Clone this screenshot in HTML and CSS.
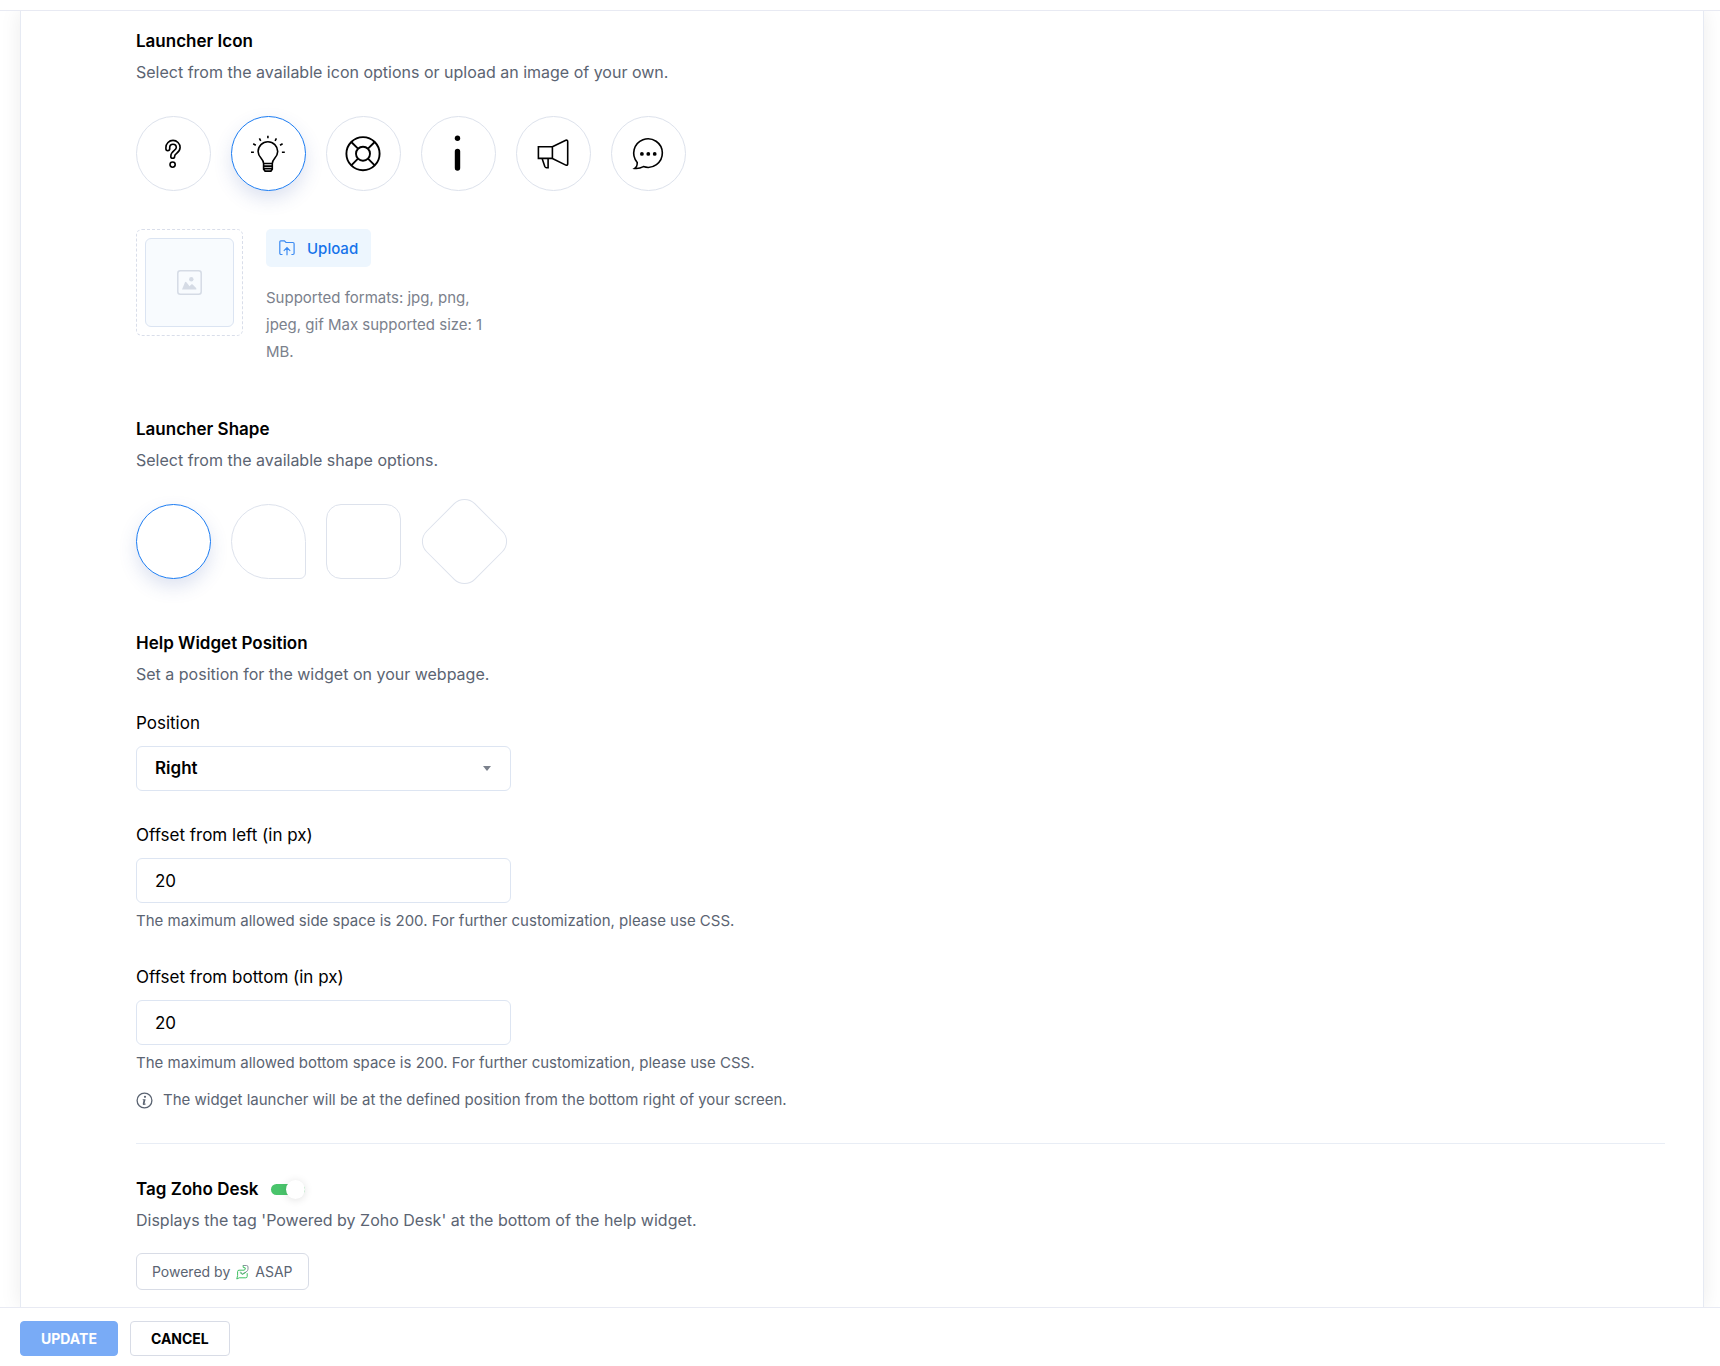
FILE: index.html
```html
<!DOCTYPE html>
<html lang="en">
<head>
    <meta charset="UTF-8">
    <meta name="viewport" content="width=device-width, initial-scale=1.0">
    <title>Help Widget</title>
    <link rel="stylesheet" href="styles.css">
</head>
<body>
    <form class="page">
        <div class="topbar"></div>
        <main class="panel">
            <section class="section">
                <h2>Launcher Icon</h2>
                <p class="desc">Select from the available icon options or upload an image of your own.</p>
                <div class="options">
                    <label class="option">
                        <input type="radio" name="icon" value="question" aria-label="Question mark">
                        <span class="shape circle">
                            <svg viewBox="0 0 42 42"><g stroke-linecap="round"><path d="M14.8 15.8v-1.3a5.2 5.2 0 0 1 10.4 0c0 4.6-5.5 4.3-5.5 8.9" stroke-width="5.4"/><path d="M14.8 15.8v-1.3a5.2 5.2 0 0 1 10.4 0c0 4.6-5.5 4.3-5.5 8.9" stroke="#fff" stroke-width="2.2"/></g><circle cx="19.6" cy="31.6" r="2.6"/></svg>
                        </span>
                    </label>
                    <label class="option">
                        <input type="radio" name="icon" value="bulb" aria-label="Light bulb" checked>
                        <span class="shape circle">
                            <svg viewBox="0 0 42 42"><path d="M15.6 30.5c0-4.6-5.5-6-5.5-12a9.8 9.8 0 0 1 19.6 0c0 6-5.4 7.4-5.4 12zM15.6 30.5v5.8l1.5 1.8h5.8l1.4-1.8v-5.8M15.6 33.1h8.7M15.6 35.6h8.7"/><path d="M19.9 2.7v2.6M11.4 5.4l1.3 2.4M28.4 5.4l-1.3 2.4M5.2 10.8l2.6 1.5M34.6 10.8l-2.6 1.5M3 19.3h2.9M36.8 19.3h-2.9"/></svg>
                        </span>
                    </label>
                    <label class="option">
                        <input type="radio" name="icon" value="lifebuoy" aria-label="Lifebuoy">
                        <span class="shape circle">
                            <svg viewBox="0 0 42 42"><g stroke-width="1.9"><circle cx="20" cy="20.7" r="16.6"/><circle cx="20" cy="20.7" r="7"/><path d="M8.3 9l6.7 6.7M31.7 9l-6.7 6.7M8.3 32.4l6.7-6.7M31.7 32.4l-6.7-6.7"/></g></svg>
                        </span>
                    </label>
                    <label class="option">
                        <input type="radio" name="icon" value="info" aria-label="Information">
                        <span class="shape circle">
                            <svg viewBox="0 0 42 42"><g fill="#000" stroke="none"><circle cx="19.5" cy="5.3" r="2.7"/><rect x="16.8" y="15.7" width="5.4" height="22" rx="2.7"/></g></svg>
                        </span>
                    </label>
                    <label class="option">
                        <input type="radio" name="icon" value="megaphone" aria-label="Megaphone">
                        <span class="shape circle">
                            <svg viewBox="0 0 42 42"><path d="M5.4 13.7h14v11.7h-14zM19.4 13.7l13.4-6.4q1.9-.7 1.9 1.4v22q0 2.1-1.9 1.4l-13.4-6.6M9.1 25.6l2.7 7.9q.6 1.2 1.7 1.2h1.6v-9.1"/></svg>
                        </span>
                    </label>
                    <label class="option">
                        <input type="radio" name="icon" value="chat" aria-label="Chat">
                        <span class="shape circle">
                            <svg viewBox="0 0 42 42"><path d="M9.2 29.4A14.3 14.3 0 1 1 15.4 33.6c-2.7 1.5-5.4 2.2-8.7 1.8 2.2-1.4 2.7-3.3 2.5-6z"/><g fill="#000" stroke="none"><circle cx="13.9" cy="20.9" r="1.9"/><circle cx="20.3" cy="20.9" r="1.9"/><circle cx="26.7" cy="20.9" r="1.9"/></g></svg>
                        </span>
                    </label>
                </div>
                <div class="upload">
                    <div class="preview">
                        <div class="preview-inner">
                            <svg viewBox="0 0 25 25"><rect x=".8" y=".8" width="23.4" height="23.4" rx="2.5" fill="none" stroke="#d5dbe5" stroke-width="1.5"/><circle cx="14.3" cy="9.3" r="2.2"/><path d="M5 19.5l3-7.2q.6-1 1.4 0l3.2 4 1.6-1.8q.8-.7 1.5 0l3.6 3.7v1.3z"/></svg>
                        </div>
                    </div>
                    <div class="upload-info">
                        <button type="button" class="btn-upload">
                            <svg viewBox="0 0 16 16"><path d="M3.5 14.5H2a1.2 1.2 0 0 1-1.2-1.2V1.8Q.8.8 1.8.8h3.6l1.6 1.7h6.9q1.2 0 1.2 1.2v9.6q0 1.2-1.2 1.2h-1.5M8 15.2V7.6M4.8 10.8L8 7.6l3.2 3.2"/></svg>
                            Upload
                        </button>
                        <p>Supported formats: jpg, png, jpeg, gif Max supported size: 1 MB.</p>
                    </div>
                </div>
            </section>

            <section class="section">
                <h2>Launcher Shape</h2>
                <p class="desc">Select from the available shape options.</p>
                <div class="options">
                    <label class="option">
                        <input type="radio" name="shape" value="circle" aria-label="Circle" checked>
                        <span class="shape circle"></span>
                    </label>
                    <label class="option">
                        <input type="radio" name="shape" value="drop" aria-label="Drop">
                        <span class="shape drop"></span>
                    </label>
                    <label class="option">
                        <input type="radio" name="shape" value="square" aria-label="Square">
                        <span class="shape square"></span>
                    </label>
                    <label class="option">
                        <input type="radio" name="shape" value="diamond" aria-label="Diamond">
                        <span class="shape diamond"></span>
                    </label>
                </div>
            </section>

            <section>
                <h2>Help Widget Position</h2>
                <p class="desc">Set a position for the widget on your webpage.</p>
                <div class="fields">
                    <div class="field">
                        <label for="position">Position</label>
                        <div class="select">
                            <select id="position">
                                <option>Right</option>
                                <option>Left</option>
                            </select>
                        </div>
                    </div>
                    <div class="field">
                        <label for="offset-left">Offset from left (in px)</label>
                        <input type="text" id="offset-left" value="20">
                        <p class="help">The maximum allowed side space is 200. For further customization, please use CSS.</p>
                    </div>
                    <div class="field">
                        <label for="offset-bottom">Offset from bottom (in px)</label>
                        <input type="text" id="offset-bottom" value="20">
                        <p class="help">The maximum allowed bottom space is 200. For further customization, please use CSS.</p>
                    </div>
                </div>
                <p class="note">
                    <svg viewBox="0 0 17 17"><circle cx="8.5" cy="8.5" r="7.4" fill="none" stroke="#5b6472" stroke-width="1.3"/><circle cx="9" cy="4.8" r="1.1"/><path d="M6.8 7.2h2.8l-1 4.2q-.1.7 1.2.2v.6q-1.2.9-2.3.7-1-.2-.7-1.4l.7-3.3-.9-.2z"/></svg>
                    The widget launcher will be at the defined position from the bottom right of your screen.
                </p>
            </section>

            <section class="tag">
                <div class="tag-head">
                    <h2><label for="tag">Tag Zoho Desk</label></h2>
                    <input type="checkbox" id="tag" class="toggle" checked>
                </div>
                <p class="desc">Displays the tag 'Powered by Zoho Desk' at the bottom of the help widget.</p>
                <div class="powered">
                    Powered by
                    <svg viewBox="0 0 13 16"><path d="M7 1.5h3.5Q12 1.5 12 3v2.2Q12 7 10 8L6.6 9.8 4.6 8" stroke="#8a929e"/><path d="M7 1.5l.3 2 1.9.3v1.6L8 6.2H3Q1.6 6.2 1.6 7.6v4L.8 15l2.4-1.2h6.6q1.4 0 1.4-1.4V9.2M3.8 8.4l2.6 2 3.4-2" stroke="#3fbf62"/></svg>
                    ASAP
                </div>
            </section>
        </main>
        <footer class="footer">
            <button type="submit" class="btn primary">UPDATE</button>
            <button type="button" class="btn">CANCEL</button>
        </footer>
    </form>
</body>
</html>
```

FILE: styles.css
```css
* {
  box-sizing: border-box;
}

body {
  margin: 0;
  font-family: Inter, "Liberation Sans", sans-serif;
  font-size: 16px;
  line-height: 24px;
  color: #000;
  background-color: #fff;
}

h2, p {
  margin: 0;
}

h2 {
  font-size: 17px;
  font-weight: 600;
}

input, select, button {
  font-family: inherit;
}

.page {
  display: flex;
  flex-direction: column;
  min-height: 100vh;
  overflow-x: clip;
}

.topbar {
  position: relative;
  z-index: 1;
  height: 11px;
  background-color: #fff;
  border-bottom: 1px solid #e8eaf3;
}

.panel {
  flex: 1;
  margin: 0 16px 0 20px;
  padding: 18px 38px 15px 115px;
  background-color: #fff;
  border: solid #e6eaf3;
  border-width: 0 1px;
  box-shadow: 0 0 20px rgba(0, 0, 0, 0.08);
}

.section {
  margin-bottom: 52px;
}

.desc {
  margin-top: 7px;
  color: #5b6472;
}

/* icon and shape pickers */
.options {
  display: flex;
  flex-wrap: wrap;
  align-items: center;
  gap: 20px;
  margin-top: 32px;
}

.option {
  position: relative;
  cursor: pointer;
}

.option input {
  position: absolute;
  inset: 0;
  margin: 0;
  opacity: 0;
}

.shape {
  display: flex;
  align-items: center;
  justify-content: center;
  width: 75px;
  height: 75px;
  border: 1px solid #dde2ec;
}

.option input:checked + .shape {
  border-color: #1a7bf2;
  box-shadow: 0 8px 18px rgba(60, 90, 170, 0.17);
}

.shape svg {
  width: 42px;
  height: 42px;
  fill: none;
  stroke: #000;
  stroke-width: 1.6;
}

.circle {
  border-radius: 50%;
}

.drop {
  border-radius: 50% 50% 6px 50%;
}

.square {
  border-radius: 15px;
}

.diamond {
  width: 69px;
  height: 69px;
  margin: 0 9px;
  border-radius: 15px;
  transform: rotate(45deg);
}

/* upload */
.upload {
  display: flex;
  align-items: flex-start;
  gap: 23px;
  margin-top: 38px;
}

.preview {
  padding: 8px;
  border: 1px dashed #d9deea;
  border-radius: 6px;
}

.preview-inner {
  display: flex;
  align-items: center;
  justify-content: center;
  width: 89px;
  height: 89px;
  background-color: #f8fbfe;
  border: 1px solid #dbe4f2;
  border-radius: 6px;
}

.preview-inner svg {
  width: 25px;
  height: 25px;
  fill: #d5dbe5;
}

.upload-info {
  max-width: 225px;
}

.upload-info p {
  margin-top: 17px;
  font-size: 15px;
  line-height: 27px;
  color: #7b818c;
}

.btn-upload {
  display: flex;
  align-items: center;
  gap: 12px;
  height: 38px;
  padding: 0 13px;
  font-size: 15px;
  font-weight: 500;
  color: #1573ea;
  background-color: #edf6fe;
  border: none;
  border-radius: 5px;
  cursor: pointer;
}

.btn-upload svg {
  width: 16px;
  height: 16px;
  fill: none;
  stroke: #3b8bf2;
  stroke-width: 1.2;
}

/* form fields */
.fields {
  display: flex;
  flex-direction: column;
  gap: 32px;
  margin-top: 25px;
}

.field label {
  display: block;
  margin-bottom: 11px;
  font-size: 17px;
}

.field input, .field select {
  display: block;
  width: 100%;
  height: 45px;
  padding: 0 18px;
  font-size: 17px;
  color: #000;
  background-color: #fff;
  border: 1px solid #dde5f2;
  border-radius: 6px;
}

.field input, .select {
  max-width: 375px;
}

.select {
  position: relative;
}

.field select {
  padding-bottom: 2px;
  appearance: none;
  font-weight: 600;
}

.select::after {
  content: "";
  position: absolute;
  top: 20px;
  right: 20px;
  border: 4px solid transparent;
  border-top: 5px solid #7b818c;
  pointer-events: none;
}

.help, .note {
  font-size: 15px;
  color: #5b6472;
}

.help {
  margin-top: 6px;
}

.note {
  display: flex;
  align-items: center;
  gap: 10px;
  margin-top: 13px;
}

.note svg {
  flex: none;
  width: 17px;
  height: 17px;
  fill: #5b6472;
}

/* powered by tag */
.tag {
  margin-top: 31px;
  padding-top: 33px;
  border-top: 1px solid #e8edf5;
}

.tag-head {
  display: flex;
  align-items: center;
  gap: 12px;
}

.toggle {
  appearance: none;
  display: flex;
  align-items: center;
  justify-content: flex-end;
  width: 34px;
  height: 11px;
  margin: 0;
  background-color: #c5cbd6;
  border-radius: 6px;
  cursor: pointer;
}

.toggle:checked {
  background-color: #49c46b;
}

.toggle::before {
  content: "";
  flex: none;
  width: 19px;
  height: 19px;
  background-color: #fff;
  border-radius: 50%;
  box-shadow: 0 1px 8px rgba(0, 0, 0, 0.12);
}

.powered {
  display: inline-flex;
  align-items: center;
  gap: 6px;
  height: 37px;
  margin-top: 21px;
  padding: 0 15px;
  font-size: 14px;
  color: #5b6472;
  border: 1px solid #d8dce6;
  border-radius: 6px;
  vertical-align: top;
}

.powered svg {
  width: 13px;
  height: 16px;
  fill: none;
}

/* footer */
.footer {
  position: sticky;
  bottom: 0;
  display: flex;
  gap: 12px;
  padding: 13px 20px 10px;
  background-color: #fff;
  border-top: 1px solid #e8eaf3;
}

.btn {
  height: 35px;
  padding: 0 20px;
  font-size: 14px;
  font-weight: 700;
  color: #000;
  background-color: #fff;
  border: 1px solid #d8dce6;
  border-radius: 4px;
  cursor: pointer;
}

.primary {
  color: #fff;
  background-color: #79abf6;
  border-color: #79abf6;
}
```
